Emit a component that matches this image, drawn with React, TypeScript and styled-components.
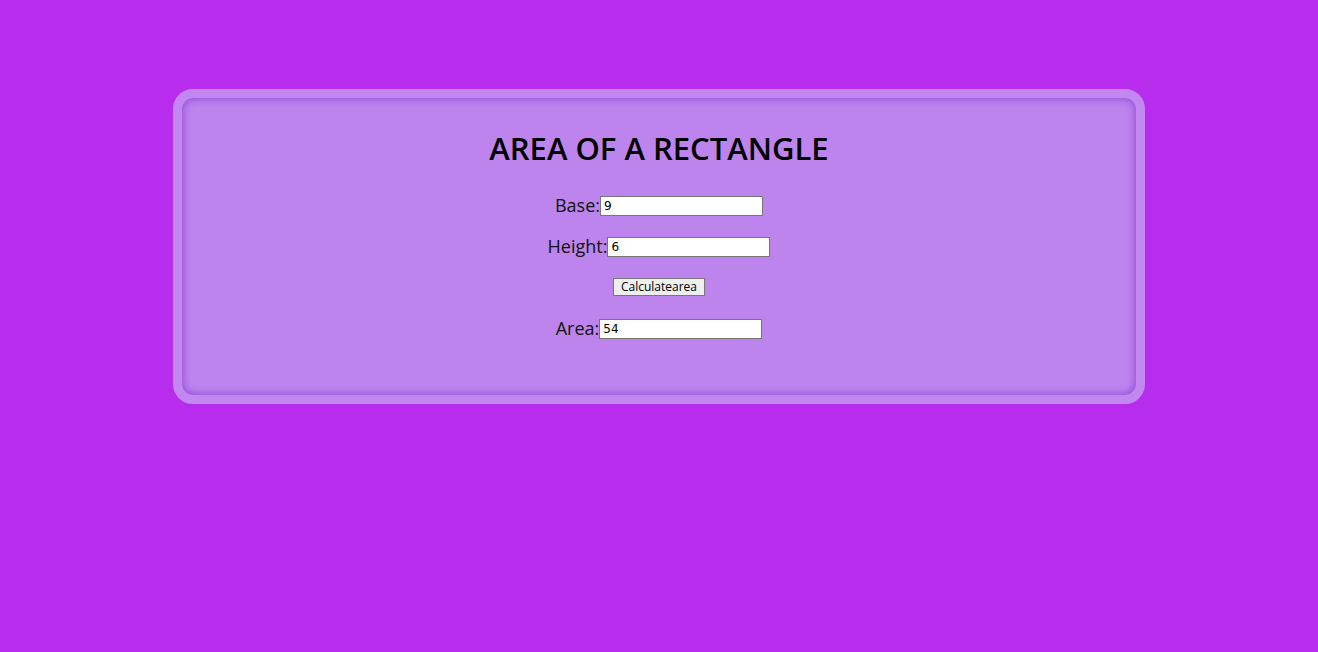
import React from "react";
import styled, { createGlobalStyle } from "styled-components";

const Global = createGlobalStyle`
  html, body { margin: 0; padding: 0; }
  body {
    background: #b82ced;
    font-family: "Open Sans", "DejaVu Sans", sans-serif;
    min-height: 652px;
  }
`;

const Page = styled.div`
  padding-top: 89px;
  display: flex;
  justify-content: center;
`;

const Card = styled.div`
  box-sizing: border-box;
  width: 972px;
  height: 315px;
  border: 9px solid #c387f1;
  border-radius: 20px;
  background: #bd84ee;
  box-shadow: inset 0 0 10px #8c3fd0;
  display: flex;
  flex-direction: column;
  align-items: center;
  padding-top: 33px;
`;

const Title = styled.h1`
  margin: 0 0 19px;
  font-size: 31px;
  font-weight: 600;
  color: #000;
  line-height: 34px;
`;

const Row = styled.div`
  display: flex;
  align-items: center;
  height: 41px;
  font-size: 18px;
  color: #111;
`;

const Label = styled.label`
  line-height: 20px;
`;

const Field = styled.input`
  box-sizing: border-box;
  width: 163px;
  height: 20px;
  border: 1px solid #767676;
  background: #fff;
  padding: 1px 3px;
  font-family: "DejaVu Sans", sans-serif;
  font-size: 12px;
  color: #000;
  margin-top: 2px;
`;

const Button = styled.button`
  box-sizing: border-box;
  width: 92px;
  height: 18px;
  border: 1px solid #767676;
  background: #efefef;
  font-family: "Open Sans", sans-serif;
  font-size: 12px;
  color: #000;
  padding: 0 4px;
  line-height: 14px;
`;

export default function App() {
  return (
    <>
      <Global />
      <Page>
        <Card>
          <Title>AREA OF A RECTANGLE</Title>
          <Row>
            <Label>Base:</Label>
            <Field defaultValue="9" />
          </Row>
          <Row>
            <Label>Height:</Label>
            <Field defaultValue="6" />
          </Row>
          <Row>
            <Button>Calculatearea</Button>
          </Row>
          <Row>
            <Label>Area:</Label>
            <Field defaultValue="54" />
          </Row>
        </Card>
      </Page>
    </>
  );
}
